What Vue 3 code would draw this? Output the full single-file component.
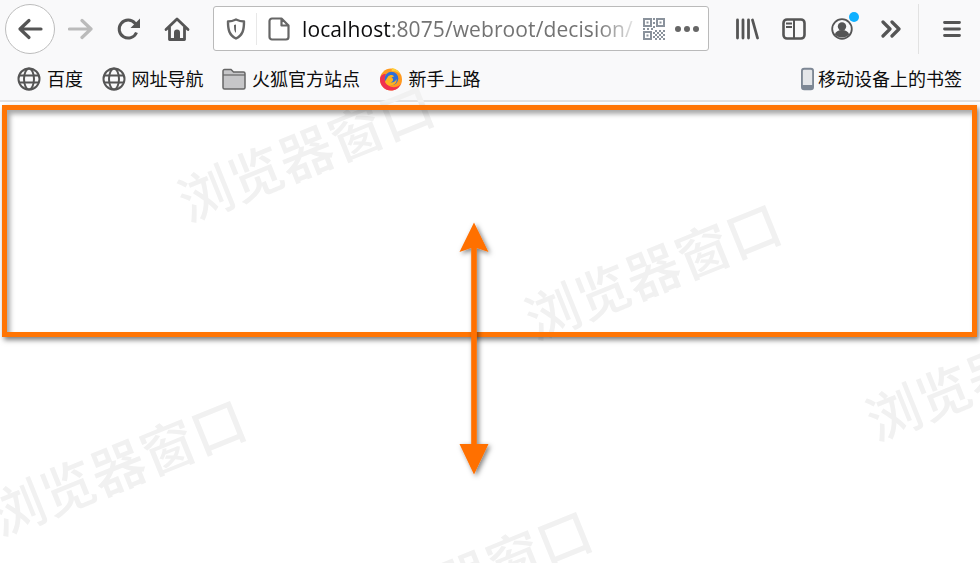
<script setup>
const bookmarks = [
  { label: '百度', icon: 'globe' },
  { label: '网址导航', icon: 'globe' },
  { label: '火狐官方站点', icon: 'folder' },
  { label: '新手上路', icon: 'fox' },
]

const watermarks = [
  { x: 305, y: 150 },
  { x: 652, y: 268 },
  { x: 117, y: 464 },
  { x: 993, y: 369 },
  { x: 463, y: 575 },
]

// qr pattern inner cells, 2px grid
const qrCells = [
  [12, 12], [16, 12], [20, 12], [14, 14], [18, 14], [12, 16], [16, 16], [20, 16],
  [14, 18], [18, 18], [12, 20], [16, 20], [20, 20], [0, 10], [4, 10], [8, 10],
  [10, 0], [10, 4], [10, 8], [10, 14], [10, 18],
]
</script>

<template>
  <div class="window">
    <div class="toolbar">
      <button class="back">
        <svg width="26" height="24" viewBox="0 0 26 24"><path d="M24 12H3M12 3.5 3 12l9 8.500" fill="none" stroke="#555" stroke-width="3.200" stroke-linecap="round" stroke-linejoin="round"/></svg>
      </button>
      <svg class="forward" width="26" height="24" viewBox="0 0 26 24"><path d="M1.500 12H23M14 3.500l9 8.500-9 8.500" fill="none" stroke="#bbb" stroke-width="3.200" stroke-linecap="round" stroke-linejoin="round"/></svg>
      <svg class="reload" width="24" height="24" viewBox="0 0 24 24"><path d="M19.500 15.500A9 9 0 1 1 18 6.200L21 9" fill="none" stroke="#555" stroke-width="3"/><path d="M23 1.500V11h-9.500z" fill="#555"/></svg>
      <svg class="home" width="26" height="24" viewBox="0 0 26 24"><path d="M2 12.500 13 2l11 10.500M5.500 10v12.500h15V10" fill="none" stroke="#555" stroke-width="2.800" stroke-linecap="round" stroke-linejoin="round"/><path d="M10 22v-6.500a3 3 0 0 1 6 0V22z" fill="#555"/></svg>

      <div class="urlbar">
        <svg class="shield" width="20" height="22" viewBox="0 0 20 22"><path d="M10 1.500c3 1.500 5.500 2 8 2 0 8-1 13.500-8 17-7-3.500-8-9-8-17 2.500 0 5-.5 8-2z" fill="none" stroke="#666" stroke-width="2.400" stroke-linejoin="round"/><path d="M10 6.500v8.500c-2-1.500-2-5-2-8z" fill="#666"/></svg>
        <span class="sep"></span>
        <svg class="page" width="22" height="24" viewBox="0 0 22 24"><path d="M4 1.500h9.500l7 7V20a2.500 2.500 0 0 1-2.500 2.500H4A2.500 2.500 0 0 1 1.500 20V4A2.500 2.500 0 0 1 4 1.500zM13.500 1.500v7h7" fill="none" stroke="#666" stroke-width="2.200" stroke-linejoin="round"/></svg>
        <div class="url"><span class="host">localhost</span><span class="path">:8075/webroot/decision/</span></div>
        <svg class="qr" width="22" height="22" viewBox="0 0 22 22" fill="#8a929c">
          <path d="M0 0h9v9H0zM2 2v5h5V2zM13 0h9v9h-9zM15 2v5h5V2zM0 13h9v9H0zM2 15v5h5v-5z" fill-rule="evenodd"/>
          <path d="M3.500 3.500h2v2h-2zM16.500 3.500h2v2h-2zM3.500 16.500h2v2h-2z"/>
          <rect v-for="(c, i) in qrCells" :key="i" :x="c[0]" :y="c[1]" width="2" height="2"/>
        </svg>
        <svg class="more" width="24" height="6" viewBox="0 0 24 6" fill="#666"><circle cx="3" cy="3" r="3"/><circle cx="12" cy="3" r="3"/><circle cx="21" cy="3" r="3"/></svg>
      </div>

      <svg class="library" width="24" height="22" viewBox="0 0 24 22"><path d="M2.500 2v18M8 2v18M13.500 2v18M17.500 2l5 18" fill="none" stroke="#555" stroke-width="2.800" stroke-linecap="round"/></svg>
      <svg class="sidebar" width="24" height="22" viewBox="0 0 24 22"><rect x="1.500" y="1.500" width="21" height="19" rx="3.500" fill="none" stroke="#555" stroke-width="2.600"/><path d="M4 5.500h6M4 9h6" stroke="#555" stroke-width="1.800"/><path d="M12 2v18" stroke="#555" stroke-width="2"/></svg>
      <div class="account">
        <svg width="22" height="22" viewBox="0 0 22 22"><circle cx="11" cy="11" r="9.800" fill="none" stroke="#555" stroke-width="1.800"/><circle cx="11" cy="8.500" r="4.200" fill="#555"/><path d="M3.800 16.500c.8-3 3.500-4.500 7.200-4.500s6.400 1.500 7.200 4.500c-3.500 4-10.900 4-14.400 0z" fill="#555"/></svg>
        <span class="dot"></span>
      </div>
      <svg class="overflow" width="20" height="18" viewBox="0 0 20 18"><path d="M2 2l7 7-7 7M11 2l7 7-7 7" fill="none" stroke="#555" stroke-width="3.200" stroke-linecap="round" stroke-linejoin="round"/></svg>
      <span class="divider"></span>
      <svg class="menu" width="18" height="18" viewBox="0 0 18 18"><path d="M1.500 2.500h15M1.500 9h15M1.500 15.500h15" stroke="#555" stroke-width="2.800" stroke-linecap="round"/></svg>
    </div>

    <div class="bookmarks">
      <div v-for="b in bookmarks" :key="b.label" class="bookmark">
        <svg v-if="b.icon === 'globe'" width="24" height="24" viewBox="0 0 24 24"><g fill="none" stroke="#555" stroke-width="2"><circle cx="12" cy="12" r="10.500"/><ellipse cx="12" cy="12" rx="5" ry="10.500"/><path d="M2 8.500h20M2 15.500h20"/></g></svg>
        <svg v-else-if="b.icon === 'folder'" width="24" height="22" viewBox="0 0 24 22"><path d="M1 3a1.500 1.500 0 0 1 1.500-1.500H9L11.500 4h10A1.500 1.500 0 0 1 23 5.500v14a1.500 1.500 0 0 1-1.500 1.500h-19A1.500 1.500 0 0 1 1 19.500z" fill="#c6c6c8" stroke="#666" stroke-width="1.500"/><path d="M1 7h22" stroke="#666" stroke-width="1.200"/></svg>
        <svg v-else width="24" height="24" viewBox="0 0 24 24">
          <circle cx="12" cy="12.500" r="11" fill="#ff9a1f"/>
          <path d="M1 12.500C1 18.600 5.900 23.500 12 23.500c4.500 0 8.300-2.700 10-6.500-4 4-9 4-12.500 1.500C5.500 16 5 11 7 7 3.500 6.500 1 9 1 12.500z" fill="#f0314f"/>
          <circle cx="12.500" cy="11.500" r="6.800" fill="#2f6fd8"/>
          <path d="M9 9.500c2-2 5-2 6 0l-2.500 1c2.500 1 2 4-1 5 3 .5 5-1 6-3.500.5 3-1 6-6 6.500-3 .2-5-2-5.500-4z" fill="#ffb21f"/>
          <path d="M13 1c4 .5 7 3 8.500 6.500C19.500 5 16 3.500 12.500 4.500z" fill="#ffcf3a"/>
        </svg>
        <span>{{ b.label }}</span>
      </div>
      <div class="bookmark mobile">
        <svg width="13" height="24" viewBox="0 0 14 24"><rect x="1" y="1" width="12" height="22" rx="2.500" fill="#e4e6e9" stroke="#7d8794" stroke-width="2"/><path d="M1 18.500h12V21a2 2 0 0 1-2 2H3a2 2 0 0 1-2-2z" fill="#7d8794"/></svg>
        <span>移动设备上的书签</span>
      </div>
    </div>

    <div class="content">
      <span
        v-for="(w, i) in watermarks"
        :key="i"
        class="watermark"
        :style="{ left: w.x + 'px', top: w.y - 101 + 'px' }"
      >浏览器窗口</span>
      <div class="frame"></div>
      <svg class="arrow" width="60" height="270" viewBox="0 0 60 270">
        <defs>
          <filter id="sh" x="-30%" y="-10%" width="170%" height="120%">
            <feDropShadow dx="2" dy="2" stdDeviation="2.500" flood-color="#000" flood-opacity=".5"/>
          </filter>
        </defs>
        <path d="M30 6.500 44.500 36 32.800 32V228h11.700L30 258.500 15.500 228h11.700V32L15.500 36z" fill="#ff7004" filter="url(#sh)"/>
      </svg>
    </div>
  </div>
</template>

<style scoped>
.window {
  position: relative;
  width: 980px;
  height: 563px;
  overflow: hidden;
  background: #fff;
  font-family: "Noto Sans CJK SC", "Open Sans", sans-serif;
}

.toolbar {
  display: flex;
  align-items: center;
  height: 57px;
  background: #f9f9fa;
}

.back {
  display: flex;
  align-items: center;
  justify-content: center;
  width: 50px;
  height: 50px;
  margin-left: 5px;
  padding: 0;
  background: #fff;
  border: 1px solid #bdbdbd;
  border-radius: 50%;
  box-sizing: border-box;
}

.forward { margin-left: 13px; }
.reload { margin-left: 23px; }
.home { margin-left: 23px; }

.urlbar {
  display: flex;
  align-items: center;
  width: 496px;
  height: 45px;
  margin-left: 23px;
  background: #fff;
  border: 1px solid #bababa;
  border-radius: 3px;
  box-sizing: border-box;
}

.shield { margin-left: 12px; }

.sep {
  width: 1px;
  height: 32px;
  margin-left: 10px;
  background: #e8e8e8;
}

.page { margin-left: 11px; }

.url {
  width: 340px;
  margin-left: 12px;
  overflow: hidden;
  white-space: nowrap;
  font-family: "Open Sans", sans-serif;
  font-size: 21px;
  letter-spacing: .1px;
  -webkit-mask-image: linear-gradient(to right, #000 295px, transparent 340px);
  mask-image: linear-gradient(to right, #000 295px, transparent 340px);
}

.host { color: #0c0c0d; }
.path { color: #737373; }

.qr { margin-left: 1px; flex: none; }
.more { margin-left: 10px; flex: none; }

.library { margin-left: 26px; }
.sidebar { margin-left: 23px; }

.account {
  position: relative;
  display: flex;
  margin-left: 25px;
}

.dot {
  position: absolute;
  top: -6px;
  right: -6px;
  width: 10px;
  height: 10px;
  background: #0fb0ff;
  border-radius: 50%;
}

.overflow { margin-left: 28px; }

.divider {
  width: 1px;
  height: 50px;
  margin-left: 17px;
  background: #e2e2e2;
}

.menu { margin-left: 24px; }

.bookmarks {
  display: flex;
  align-items: center;
  height: 43px;
  padding: 0 18px 0 17px;
  gap: 18.500px;
  background: #f9f9fa;
  border-bottom: 2px solid #e1e1e2;
  font-size: 18px;
  color: #0c0c0d;
}

.bookmark {
  display: flex;
  align-items: center;
  gap: 6px;
  white-space: nowrap;
}

.bookmark span {
  position: relative;
  top: -1px;
}

.mobile {
  margin-left: auto;
  gap: 4px;
}

.content {
  position: relative;
  height: 461px;
}

.watermark {
  position: absolute;
  transform: translate(-50%, -50%) rotate(-22deg);
  white-space: nowrap;
  font-size: 54px;
  line-height: 1;
  font-weight: 500;
  color: #f1f1f1;
}

.frame {
  position: absolute;
  top: 3px;
  left: 2px;
  width: 975px;
  height: 232px;
  box-sizing: border-box;
  border: 5px solid #ff7504;
  box-shadow: 2px 3px 5px rgba(0, 0, 0, .5), inset 3px 4px 5px rgba(0, 0, 0, .35);
}

.arrow {
  position: absolute;
  top: 114px;
  left: 444px;
}
</style>
